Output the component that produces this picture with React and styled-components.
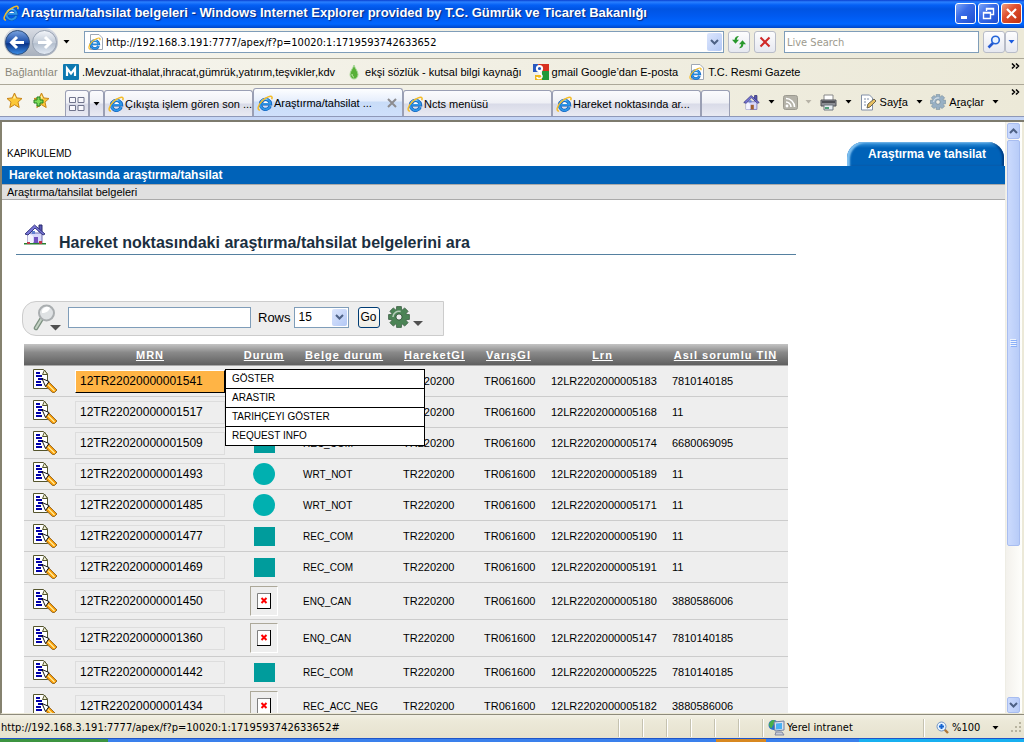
import React from "react"
import styled, { createGlobalStyle, css } from "styled-components"

const GlobalStyle = createGlobalStyle`
    * {
        box-sizing: border-box;
    }
    body {
        margin: 0;
        background: white;
        color: black;
        font-family: "Liberation Sans", Arial, sans-serif;
        overflow: hidden;
    }
    button, input, select {
        font-family: inherit;
        color: inherit;
        margin: 0;
    }
    a {
        color: inherit;
        text-decoration: none;
    }
    svg {
        display: block;
        flex: none;
    }
`

const uiFont = css`
    font-family: "DejaVu Sans Condensed", "DejaVu Sans", sans-serif;
    font-size: 11px;
`

const labelFont = css`
    font-family: "Liberation Sans", Arial, sans-serif;
    font-size: 11px;
`

const Window = styled.div`
    height: 100vh;
    display: flex;
    flex-direction: column;
    background: #ece9d8;
`

/* title bar */

const TitleBar = styled.header`
    flex: none;
    height: 28px;
    padding: 0 2px 2px 3px;
    display: flex;
    align-items: center;
    gap: 2px;
    background: linear-gradient(#0a3fd0 0, #2a80ff 2px, #0560f5 5px, #0054e3 9px, #005af0 16px, #0066ff 24px, #0046c8 28px);
`

const WindowTitle = styled.h1`
    flex: 1;
    min-width: 0;
    margin: 0;
    color: white;
    font-family: "Liberation Sans", Arial, sans-serif;
    font-size: 13px;
    font-weight: 700;
    line-height: 20px;
    white-space: nowrap;
    overflow: hidden;
    text-shadow: 1px 1px 1px #0a2a80;
`

const WindowButton = styled.button`
    width: 21px;
    height: 21px;
    padding: 0;
    display: flex;
    align-items: center;
    justify-content: center;
    border: 1px solid white;
    border-radius: 3px;
    background: ${({ $close }) => ($close
        ? "linear-gradient(135deg, #f0a080, #e05030 40%, #c03010)"
        : "linear-gradient(135deg, #7ea6f8, #3a6ce8 40%, #1f4fd0)")};
`

/* browser bars */

const Bar = styled.div`
    flex: none;
    display: flex;
    align-items: center;
    background: linear-gradient(90deg, #f6f5ee, #ece9d8);
    ${uiFont}
`

const NavBar = styled(Bar)`
    height: 31px;
    padding: 0 6px 2px 4px;
    gap: 4px;
    border-bottom: 1px solid #aca899;
`

const HistoryGroup = styled.div`
    display: flex;
    align-items: center;
    gap: 5px;
    width: 76px;
`

const HistoryPill = styled.div`
    display: flex;
    height: 28px;
    align-items: center;
    border-radius: 14px;
    background: linear-gradient(#d8dce4, #a8b0bc);
`

const PlainButton = styled.button`
    padding: 0;
    border: 0;
    background: none;
    display: flex;
    align-items: center;
    justify-content: center;
    gap: 3px;
    font-size: inherit;
    white-space: nowrap;
`

const AddressBox = styled.label`
    flex: 1;
    min-width: 0;
    height: 22px;
    padding: 0 1px 0 3px;
    display: flex;
    align-items: center;
    gap: 2px;
    background: white;
    border: 1px solid #7f9db9;
`

const BareInput = styled.input`
    flex: 1;
    min-width: 0;
    height: 18px;
    padding: 0;
    border: 0;
    outline: 0;
    background: none;
    font-size: 11px;
    &::placeholder {
        color: #9d9a8e;
        opacity: 1;
    }
`

const DropButton = styled.button`
    width: 15px;
    height: 18px;
    padding: 0;
    display: flex;
    align-items: center;
    justify-content: center;
    border: 0;
    border-radius: 2px;
    background: linear-gradient(135deg, #dce6fd, #b3c8f5);
`

const IconButton = styled.button`
    width: ${({ $width }) => $width || 22}px;
    height: 22px;
    padding: 0;
    display: flex;
    align-items: center;
    justify-content: center;
    border: 1px solid #b8bcc8;
    border-radius: 3px;
    background: linear-gradient(#fdfdfe, #e6e8f0);
`

const SearchGroup = styled.div`
    display: flex;
    gap: 4px;
    margin-left: 4px;
`

const SearchBox = styled(AddressBox)`
    flex: none;
    width: 195px;
    padding: 0 2px;
`

const SplitButtons = styled.div`
    display: flex;
`

const LinksBar = styled(Bar)`
    height: 26px;
    padding: 0 4px 0 5px;
    border-bottom: 1px solid #aca899;
    ${labelFont}
`

const LinksLabel = styled.span`
    width: 58px;
    color: #8a877a;
`

const BookmarkLink = styled.a`
    display: flex;
    align-items: center;
    gap: 3px;
    margin-right: 11px;
    white-space: nowrap;
`

const Chevrons = styled(PlainButton)`
    margin-left: auto;
    align-self: flex-start;
    margin-top: 4px;
`

const TabsBar = styled(Bar)`
    height: 32px;
    padding: 0 4px 0 6px;
    align-items: flex-end;
    border-bottom: 1px solid #8e98b8;
    ${labelFont}
`

const Favourites = styled.div`
    display: flex;
    align-self: center;
    gap: 10px;
    width: 59px;
`

const tabShape = css`
    height: 26px;
    border: 1px solid #9a9fb4;
    border-bottom: 0;
    border-radius: 3px 3px 0 0;
    background: linear-gradient(#fbfbfd 0, #eff0f5 12px, #d9dbe8 13px, #e9eaf2 100%);
`

const SmallTab = styled.button`
    ${tabShape}
    width: ${({ $width }) => $width}px;
    padding: 0;
    display: flex;
    align-items: center;
    justify-content: center;
`

const Tab = styled.button`
    ${tabShape}
    flex: 0 1 ${({ $active }) => ($active ? 150 : 149)}px;
    min-width: 0;
    padding: 0 0 0 3px;
    display: flex;
    align-items: center;
    gap: 1px;
    font-size: 11px;
    ${({ $active }) => $active && css`
        height: 28px;
        padding-right: 5px;
        background: linear-gradient(#fdfeff 0, #e6eefc 12px, #c8dcf8 13px, #cfe0fb 100%);
    `}
`

const TabText = styled.span`
    flex: 1;
    min-width: 0;
    text-align: left;
    white-space: nowrap;
`

const Tools = styled.div`
    flex: 1;
    height: 28px;
    padding: 0 12px 0 13px;
    display: flex;
    align-items: center;
    justify-content: space-between;
`

const TabEdge = styled.div`
    flex: none;
    height: 5px;
    background: #c5d5f5;
    border-bottom: 2px solid #7d7b6e;
`

/* page */

const Viewport = styled.div`
    flex: 1;
    min-height: 0;
    display: flex;
    border-left: 2px solid #85826f;
    border-bottom: 1px solid #ece9d8;
    background: white;
`

const Page = styled.main`
    flex: 1;
    min-width: 0;
    overflow: hidden;
`

const PageTop = styled.div`
    height: 44px;
    padding: 0 1px 0 5px;
    display: flex;
    align-items: flex-end;
    justify-content: space-between;
    font-size: 10px;
`

const UserName = styled.span`
    line-height: 12px;
    padding-bottom: 6px;
`

const PageTab = styled.a`
    width: 157px;
    height: 24px;
    padding-left: 3px;
    border-radius: 16px 16px 0 0;
    background: linear-gradient(#3c9ae0, #0062b8 6px);
    box-shadow: inset 3px 1px 2px #7fc0f0, inset -2px 0 2px #003c80;
    color: white;
    font-size: 12px;
    font-weight: 700;
    line-height: 24px;
    text-align: center;
`

const BlueBar = styled.div`
    height: 18px;
    padding-left: 7px;
    background: #0062b8;
    color: white;
    font-size: 12px;
    font-weight: 700;
    line-height: 19px;
`

const Breadcrumb = styled.div`
    height: 16px;
    padding-left: 5px;
    background: #e0e0e0;
    border-top: 1px solid #aaa;
    border-bottom: 1px solid #aaa;
    font-size: 11px;
    line-height: 15px;
`

const Heading = styled.h2`
    max-width: 780px;
    height: 32px;
    margin: 23px 14px 46px;
    padding-left: 8px;
    display: flex;
    gap: 13px;
    border-bottom: 1px solid #5580a0;
    color: #1b2f3f;
    font-size: 16px;
    line-height: 40px;
`

const SearchForm = styled.form`
    width: 422px;
    height: 35px;
    margin: 0 0 8px 20px;
    padding: 0 0 3px 9px;
    display: flex;
    align-items: center;
    background: #eee;
    border: 1px solid #ccc;
    border-radius: 14px 0 0 14px;
    font-size: 13px;
`

const SearchInput = styled.input`
    width: 183px;
    height: 21px;
    margin: 0 7px 0 4px;
    border: 1px solid #7f9db9;
    background: white;
`

const SelectWrap = styled.span`
    position: relative;
    margin: 0 9px 0 3px;
`

const RowsSelect = styled.select`
    appearance: none;
    display: block;
    width: 55px;
    height: 21px;
    padding: 0 4px;
    border: 1px solid #7f9db9;
    border-radius: 0;
    background: white;
    font-size: 12px;
`

/* lies over the right end of the select */
const SelectArrow = styled.span`
    position: absolute;
    top: 2px;
    right: 2px;
    width: 15px;
    height: 17px;
    display: flex;
    align-items: center;
    justify-content: center;
    border-radius: 2px;
    background: linear-gradient(135deg, #dce6fd, #b3c8f5);
    pointer-events: none;
`

const GoButton = styled.button`
    width: 22px;
    height: 21px;
    padding: 0;
    margin-right: 8px;
    border: 1px solid #003c74;
    border-radius: 3px;
    background: linear-gradient(white, #eeece4);
    font-size: 12px;
`

const Report = styled.table`
    width: 764px;
    margin-left: 22px;
    table-layout: fixed;
    border-collapse: separate;
    border-spacing: 0;
    background: #eee;
    font-size: 11px;
`

const HeadCell = styled.th`
    height: 22px;
    padding: 0;
    background: linear-gradient(#c4c4c4, #8a8a8a 40%, #606060);
    border-bottom: 1px solid #aaa;
    color: white;
    font-size: 11px;
    letter-spacing: 1px;
    line-height: 20px;
    white-space: nowrap;
    a {
        text-decoration: underline;
    }
`

const Cell = styled.td`
    height: ${({ $tall }) => ($tall ? 37 : 31)}px;
    padding: 0 9px;
    border-bottom: 1px solid #ccc;
    white-space: nowrap;
    font-size: ${({ $code }) => ($code ? 10 : 11)}px;
`

const MrnBox = styled.div`
    position: relative;
    height: 23px;
    padding-left: 4px;
    border: 1px solid #ddd;
    font-size: 12px;
    line-height: 21px;
    ${({ $active }) => $active && css`
        background: #ffb445;
        border-color: white black black white;
    `}
`

/* pops up beside the active MRN */
const Popup = styled.ul`
    position: absolute;
    z-index: 2;
    top: -2px;
    left: calc(100% + 1px);
    width: 200px;
    margin: 0;
    padding: 0;
    list-style: none;
    border: 1px solid black;
    background: white;
`

const PopupItem = styled.li`
    height: 19px;
    padding-left: 6px;
    border-bottom: 1px solid black;
    font-size: 10px;
    line-height: 18px;
    &:last-child {
        height: 18px;
        border-bottom: 0;
    }
`

const Mark = styled.div`
    width: 21px;
    height: 19px;
    margin: 0 auto;
    background: #009c9c;
    ${({ $round }) => $round && css`
        width: 22px;
        height: 22px;
        border-radius: 50%;
        background: #00b0b0;
    `}
`

const MissingImage = styled.div`
    width: 28px;
    height: 30px;
    margin: 0 auto;
    display: flex;
    align-items: center;
    justify-content: center;
    border: 1px solid;
    border-color: #aca899 white white #aca899;
`

const ScrollBar = styled.div`
    width: 19px;
    padding: 1px 2px 0 1px;
    display: flex;
    flex-direction: column;
    gap: 1px;
    border-left: 1px solid #eeede5;
    border-right: 2px solid #ece9d8;
    background: linear-gradient(90deg, #f3f1ec, #fefefb);
`

const scrollPart = css`
    display: flex;
    align-items: center;
    justify-content: center;
    border: 1px solid #a8bdf0;
    border-radius: 2px;
    background: linear-gradient(90deg, #cbdafd, #b8ccf8);
`

const ScrollButton = styled.button`
    ${scrollPart}
    height: 16px;
    padding: 0;
    flex: none;
`

const ScrollThumb = styled.div`
    ${scrollPart}
    flex: 407;
`

const ScrollTrack = styled.div`
    flex: 150;
`

/* bottom */

const StatusBar = styled(Bar)`
    height: 24px;
    padding-top: 2px;
    border-top: 1px solid #8e8b7c;
    background: linear-gradient(#f3f1e6, #ece9d8 6px, #e6e2cf);
`

const StatusText = styled.span`
    flex: 1;
    min-width: 0;
    padding-left: 1px;
    white-space: nowrap;
`

const StatusPane = styled.div`
    width: ${({ $width }) => $width}px;
    height: 18px;
    padding-left: 5px;
    display: flex;
    align-items: center;
    gap: 2px;
    border-left: 1px solid #c5c2b0;
    box-shadow: inset 1px 0 white;
`

const ZoomPane = styled(StatusPane)`
    padding: 0 1px 0 12px;
    justify-content: space-between;
`

const Taskbar = styled.div`
    flex: none;
    height: 4px;
    display: flex;
    background: #3a80ec;
    border-top: 1px solid #1f55c8;
`

const TaskPart = styled.div`
    flex: ${({ $grow }) => $grow};
    background: ${({ $color }) => $color};
`

/* icons */

const Caret = ({ color = "black" }) => (
    <svg width="7" height="4" viewBox="0 0 7 4"><path d="M.500 0h6L3.500 3.500z" fill={color} /></svg>
)

const Arrow = ({ up, color = "#4d6185" }) => (
    <svg width="9" height="6" viewBox="0 0 9 6">
        <path d={up ? "M1 5l3.500-3.500L8 5" : "M1 1l3.500 3.500L8 1"} fill="none" stroke={color} strokeWidth="2" />
    </svg>
)

const IeIcon = ({ page, size = 16 }) => (
    <svg width={size} height={size} viewBox="0 0 16 16">
        {page && <path d="M2.500.5h8.500l3.500 3.500v11.500h-12z" fill="white" stroke="#a0a8b4" />}
        <g transform={page ? "translate(0 3) scale(.8)" : undefined}>
            <path d="M13.200 11.200A5 5 0 1 1 13.500 8.800H5" fill="none" stroke="#0c58b4" strokeWidth="3.200" />
            <path d="M13.200 11.200A5 5 0 1 1 13.500 8.800H5" fill="none" stroke="#2e96e8" strokeWidth="2" />
            <path d="M4.500 6.500a4.700 4.700 0 0 1 6-2.200" fill="none" stroke="#a4dcfc" strokeWidth="1.200" />
            <path d="M6 8h5.500a3 2.500 0 0 0-5.500 0z" fill="white" />
            <path d="M3 15C0 15.500 .5 10 5.500 5.500 9 2.200 14 .2 15 2c.3.800 0 1.500-.3 2.200" fill="none" stroke="#f4bc28" strokeWidth="1.500" />
        </g>
    </svg>
)

const RoundArrow = ({ forward }) => (
    <svg width="27" height="27" viewBox="0 0 27 27">
        <defs>
            <linearGradient id={forward ? "fwd" : "back"} x1="0" y1="0" x2="0" y2="1">
                <stop offset="0" stopColor={forward ? "#f4f6fa" : "#7ba4e0"} />
                <stop offset=".5" stopColor={forward ? "#c2cbd8" : "#1c4ea8"} />
                <stop offset=".55" stopColor={forward ? "#b4bfce" : "#0a3388"} />
                <stop offset="1" stopColor={forward ? "#e4ecf6" : "#3d90e8"} />
            </linearGradient>
        </defs>
        <circle cx="13.500" cy="13.500" r="12" fill={`url(#${forward ? "fwd" : "back"})`} stroke={forward ? "#98a2b2" : "#30507c"} />
        <path
            d="M20 13.500H8M13 8l-5.500 5.500L13 19"
            transform={forward ? "matrix(-1 0 0 1 27 0)" : undefined}
            fill="none"
            stroke="white"
            strokeWidth="3"
        />
    </svg>
)

const Star = ({ plus }) => (
    <svg width="17" height="17" viewBox="0 0 17 17">
        <path d="M8.500 1l2.200 4.900 5.300.6-4 3.600 1.200 5.400-4.700-2.800-4.700 2.800L5 10.100 1 6.500l5.300-.6z" fill="#fcc838" stroke="#c88418" />
        <path d="M8.500 3l1.400 3.500H7z" fill="#fff2a0" />
        {plus && <path d="M4 5h3v3h3v3H7v3H4v-3H1V8h3z" fill="#7cdc58" stroke="#228020" />}
    </svg>
)

const HomeIcon = ({ large }) => (
    <svg width={large ? 22 : 17} height={large ? 22 : 17} viewBox="0 0 22 22">
        <path d="M15 2h3v7h-3z" fill="#5a58b8" stroke="#28286c" />
        <path d="M4 10h14v10H4z" fill="#d8d8fa" stroke="#6c6cb0" />
        <path d="M4 10l5 3v7H4z" fill="#f4f4ff" />
        <path d="M1 11L10.500 2 21 11l-2 1-8-7-7 7z" fill="#7876d8" stroke="#383880" />
        <path d="M10 14h4v6h-4z" fill={large ? "#7050c0" : "#a06030"} />
        <path d="M8 8h3v3H8z" fill="#6080d0" />
        {large && <path d="M0 20h22v1.500H0z" fill="#288030" />}
        {large && <path d="M3 19h3v2H3zM15 18h3v3h-3z" fill="#c03848" />}
    </svg>
)

const RssIcon = () => (
    <svg width="15" height="15" viewBox="0 0 15 15">
        <rect x=".5" y=".5" width="14" height="14" rx="2" fill="#b4b2a8" stroke="#9c9a90" />
        <circle cx="4" cy="11" r="1.400" fill="white" />
        <path d="M3 7a5 5 0 0 1 5 5M3 3.500A8.500 8.500 0 0 1 11.500 12" fill="none" stroke="white" strokeWidth="1.600" />
    </svg>
)

const PrinterIcon = () => (
    <svg width="17" height="17" viewBox="0 0 17 17">
        <path d="M4 1h9v6H4z" fill="white" stroke="#888" />
        <path d="M1 6h15v6H1z" fill="#8c8e94" stroke="#505258" />
        <path d="M2 7h13v2H2z" fill="#4c4e54" />
        <path d="M4 11h9v5H4z" fill="#e8eef4" stroke="#707880" />
        <path d="M5 13h4v2H5z" fill="#50a078" />
    </svg>
)

const PageIcon = () => (
    <svg width="17" height="17" viewBox="0 0 17 17">
        <path d="M1.500 1h8l3 3v12h-11z" fill="white" stroke="#8290a8" />
        <path d="M4 5h5M4 8h3M4 11h5" stroke="#8090a8" strokeDasharray="2 1" />
        <path d="M7 14l1-4 6-5 2 2-6 6z" fill="#e8c060" stroke="#6c6450" />
    </svg>
)

const teeth = [0, 45, 90, 135, 180, 225, 270, 315]

const GearIcon = ({ size, fill, stroke, hole }) => (
    <svg width={size} height={size} viewBox="0 0 20 20">
        {teeth.map((angle) => (
            <path key={angle} d="M7.500 5l.3-4.500h4.400l.3 4.500z" fill={fill} stroke={stroke} strokeWidth=".6" transform={`rotate(${angle} 10 10)`} />
        ))}
        <circle cx="10" cy="10" r="6.800" fill={fill} />
        <path d="M4.500 10a5.500 5.500 0 0 1 7-5" fill="none" stroke="white" strokeOpacity=".6" strokeWidth="1.400" />
        <circle cx="10" cy="10" r="2.800" fill={hole} stroke={stroke} strokeWidth=".8" />
    </svg>
)

const QuickTabsIcon = () => (
    <svg width="16" height="14" viewBox="0 0 16 14">
        <path d="M.5.500h6v5h-6zM9 .5h6v5H9zM.500 8.500h6v5h-6zM9 8.500h6v5H9z" fill="#f8f8fc" stroke="#70748c" />
    </svg>
)

const MIcon = () => (
    <svg width="16" height="16" viewBox="0 0 16 16">
        <rect width="16" height="16" rx="1" fill="#0c78b0" />
        <path d="M4 12V4.500l4 5 4-5V12" fill="none" stroke="white" strokeWidth="2.200" />
    </svg>
)

const DropIcon = () => (
    <svg width="16" height="16" viewBox="0 0 16 16">
        <path d="M8 1c1 3.500 4 6 4 9.500a4 4.500 0 0 1-8 0C4 7 7 4.500 8 1z" fill="#58b038" stroke="#a8d898" />
        <path d="M6 10c0 2 1 3 2 3" fill="none" stroke="#d0f0b8" />
    </svg>
)

const GoogleIcon = () => (
    <svg width="16" height="16" viewBox="0 0 16 16">
        <path d="M0 0h5v8H0z" fill="#2858c0" />
        <path d="M5 0h11v7H7z" fill="#d83020" />
        <path d="M9 7h7v9H9z" fill="#209838" />
        <path d="M0 8h9v8H0z" fill="#f0efe8" />
        <path d="M2 11h7v5H2z" fill="#f0b818" />
        <circle cx="6.500" cy="4.500" r="2.600" fill="#2858c0" stroke="white" strokeWidth="2" />
        <path d="M7 8c-2 2 3 2 2 5-1 2-5 2-5 0" fill="none" stroke="white" strokeWidth="1.600" />
    </svg>
)

const RefreshIcon = () => (
    <svg width="14" height="14" viewBox="0 0 16 16">
        <path d="M8 1C5 1 3 2.500 3 5.500H0L4 10l4-4.500H5.500C5.500 4 6 3 8 1z" fill="#28982c" />
        <path d="M8 15c3 0 5-1.500 5-4.500h3L12 6l-4 4.500h2.500c0 1.500-.5 2.500-2.500 4.500z" fill="#28982c" />
    </svg>
)

const Magnifier = () => (
    <svg width="14" height="14" viewBox="0 0 14 14">
        <path d="M6 8l-4.500 4.500" stroke="#2458d0" strokeWidth="2.600" />
        <circle cx="8.500" cy="5" r="3.800" fill="#eaf4ff" stroke="#2464d8" strokeWidth="1.600" />
    </svg>
)

const SearchLens = () => (
    <svg width="32" height="28" viewBox="0 0 32 28">
        <path d="M9.500 16L4 25" stroke="#7c9080" strokeWidth="4.500" strokeLinecap="round" />
        <path d="M9.500 16L4 25" stroke="#c4d2c4" strokeWidth="2" strokeLinecap="round" />
        <circle cx="14.500" cy="10" r="7.500" fill="#dfe2e4" stroke="#aaaeb0" strokeWidth="2" />
        <path d="M10 10a5 5 0 0 1 8-5c-1 3-4 5-8 5z" fill="white" />
        <path d="M18 22h11l-5.500 5.500z" fill="#505050" />
    </svg>
)

const EditIcon = () => (
    <svg width="25" height="24" viewBox="0 0 25 24">
        <path d="M.5.500h10l4 4.500v14.500H.5z" fill="white" stroke="#54542c" />
        <path d="M9.500 5.500l2-4.500 3 4.500z" fill="#f4f4d8" stroke="#54542c" />
        <path d="M3 3.500h4M3 6.500h6M5 9.500h5M3 12.500h5M3 15.500h6" stroke="#0000a8" strokeWidth="2" shapeRendering="crispEdges" />
        <path d="M16 13l8 8-2.500 2.500h-2L12.500 17z" fill="#f89c08" stroke="#704808" strokeWidth=".7" />
        <path d="M9 9.500l7 3-3.500 5z" fill="white" stroke="black" strokeWidth=".9" />
        <path d="M15 15.500l6.500 6.500" stroke="#fff0a0" strokeWidth="1.200" />
    </svg>
)

const BrokenIcon = () => (
    <svg width="14" height="16" viewBox="0 0 14 16">
        <path d="M.5.500h13v15H.5z" fill="white" stroke="#808080" />
        <path d="M13.500 0v15.500H0" fill="none" stroke="black" />
        <path d="M4.500 5l5 5M9.500 5l-5 5" stroke="red" strokeWidth="2" />
    </svg>
)

const IntranetIcon = () => (
    <svg width="17" height="17" viewBox="0 0 17 17">
        <circle cx="5.500" cy="6" r="5" fill="#2870c8" />
        <path d="M1 5c2-4 5-5 6-3S4 6 4 9C2 9 1 7 1 5z" fill="#48b048" />
        <path d="M6 3l10-1v9l-9 1z" fill="#d8e0f0" stroke="#7080a0" />
        <path d="M8 4.500l6-.5v6l-6 .5z" fill="#48b0f4" />
        <path d="M8 13h6l2 3H7z" fill="#c8ccd8" stroke="#8088a0" />
    </svg>
)

const ZoomIcon = () => (
    <svg width="13" height="13" viewBox="0 0 13 13">
        <path d="M8 8l4 4" stroke="#b07838" strokeWidth="2.400" />
        <circle cx="5.500" cy="5.500" r="4.500" fill="#e4f2ff" stroke="#7494c0" />
        <path d="M5.500 3v5M3 5.500h5" stroke="#1464d0" strokeWidth="2" />
    </svg>
)

const GripIcon = () => (
    <svg width="12" height="12" viewBox="0 0 12 12">
        <path d="M8 0h2v2H8zM4 4h2v2H4zM8 4h2v2H8zM0 8h2v2H0zM4 8h2v2H4zM8 8h2v2H8z" fill="#b8b4a0" />
    </svg>
)

const ChevronsIcon = () => (
    <svg width="9" height="6" viewBox="0 0 9 6">
        <path d="M1 .5L3.500 3 1 5.500M5 .5L7.500 3 5 5.500" fill="none" stroke="black" strokeWidth="1.500" />
    </svg>
)

/* data */

const url = "http://192.168.3.191:7777/apex/f?p=10020:1:1719593742633652"

const bookmarks = [
    { icon: <MIcon />, text: ".Mevzuat-ithalat,ihracat,gümrük,yatırım,teşvikler,kdv" },
    { icon: <DropIcon />, text: "ekşi sözlük - kutsal bilgi kaynağı" },
    { icon: <GoogleIcon />, text: "gmail Google’dan E-posta" },
    { icon: <IeIcon page />, text: "T.C. Resmi Gazete" },
]

const tabs = [
    { text: "Çıkışta işlem gören son ..." },
    { text: "Araştırma/tahsilat ...", active: true },
    { text: "Ncts menüsü" },
    { text: "Hareket noktasında ar..." },
]

const columns = [
    { width: 42 },
    { width: 168, title: "MRN" },
    { width: 60, title: "Durum" },
    { width: 100, title: "Belge durum" },
    { width: 81, title: "HareketGI" },
    { width: 67, title: "VarışGI" },
    { width: 121, title: "Lrn" },
    { width: 125, title: "Asıl sorumlu TIN" },
]

const rows = [
    { mrn: "1541", code: "REC_COM", lrn: "5183", tin: "7810140185", active: true },
    { mrn: "1517", code: "REC_COM", lrn: "5168", tin: "11" },
    { mrn: "1509", code: "REC_COM", lrn: "5174", tin: "6680069095" },
    { mrn: "1493", code: "WRT_NOT", lrn: "5189", tin: "11" },
    { mrn: "1485", code: "WRT_NOT", lrn: "5171", tin: "11" },
    { mrn: "1477", code: "REC_COM", lrn: "5190", tin: "11" },
    { mrn: "1469", code: "REC_COM", lrn: "5191", tin: "11" },
    { mrn: "1450", code: "ENQ_CAN", lrn: "5180", tin: "3880586006" },
    { mrn: "1360", code: "ENQ_CAN", lrn: "5147", tin: "7810140185" },
    { mrn: "1442", code: "REC_COM", lrn: "5225", tin: "7810140185" },
    { mrn: "1434", code: "REC_ACC_NEG", lrn: "5182", tin: "3880586006" },
]

const menu = ["GÖSTER", "ARASTIR", "TARIHÇEYI GÖSTER", "REQUEST INFO"]

const Status = ({ code }) => {
    switch (code) {
        case "REC_COM":
            return <Mark />
        case "WRT_NOT":
            return <Mark $round />
        default:
            return <MissingImage><BrokenIcon /></MissingImage>
    }
}

const Row = ({ mrn, code, lrn, tin, active }) => {
    const tall = code === "ENQ_CAN" || code === "REC_ACC_NEG"
    return (
        <tr>
            <Cell $tall={tall}><a href="#edit" aria-label="Edit"><EditIcon /></a></Cell>
            <Cell $tall={tall}>
                <MrnBox $active={active}>
                    <a href="#mrn">12TR2202000000{mrn}</a>
                    {active && (
                        <Popup>
                            {menu.map((item) => <PopupItem key={item}><a href="#item">{item}</a></PopupItem>)}
                        </Popup>
                    )}
                </MrnBox>
            </Cell>
            <Cell $tall={tall}><Status code={code} /></Cell>
            <Cell $tall={tall} $code>{code}</Cell>
            <Cell $tall={tall}>TR220200</Cell>
            <Cell $tall={tall}>TR061600</Cell>
            <Cell $tall={tall}>12LR220200000{lrn}</Cell>
            <Cell $tall={tall}>{tin}</Cell>
        </tr>
    )
}

const BrowserHead = () => (
    <>
        <TitleBar>
            <IeIcon />
            <WindowTitle>
                Araştırma/tahsilat belgeleri - Windows Internet Explorer provided by T.C. Gümrük ve Ticaret Bakanlığı
            </WindowTitle>
            <WindowButton aria-label="Minimize">
                <svg width="13" height="13" viewBox="0 0 13 13"><path d="M2 9h6v3H2z" fill="white" /></svg>
            </WindowButton>
            <WindowButton aria-label="Restore">
                <svg width="13" height="13" viewBox="0 0 13 13">
                    <path d="M4.500 4V1.500h7v6H9M1.500 5.500h7v6h-7zM1.500 6h7M4.500 2h7" fill="none" stroke="white" strokeWidth="1.400" />
                </svg>
            </WindowButton>
            <WindowButton $close aria-label="Close">
                <svg width="13" height="13" viewBox="0 0 13 13"><path d="M2 2l9 9M11 2l-9 9" stroke="white" strokeWidth="2.200" /></svg>
            </WindowButton>
        </TitleBar>
        <NavBar>
            <HistoryGroup>
                <HistoryPill>
                    <PlainButton aria-label="Back"><RoundArrow /></PlainButton>
                    <PlainButton aria-label="Forward"><RoundArrow forward /></PlainButton>
                </HistoryPill>
                <PlainButton aria-label="History"><Caret /></PlainButton>
            </HistoryGroup>
            <AddressBox>
                <IeIcon page />
                <BareInput aria-label="Address" defaultValue={url} />
                <DropButton aria-label="Addresses"><Arrow /></DropButton>
            </AddressBox>
            <IconButton aria-label="Refresh"><RefreshIcon /></IconButton>
            <IconButton aria-label="Stop">
                <svg width="12" height="12" viewBox="0 0 12 12"><path d="M1.500 1.500l9 9M10.500 1.500l-9 9" stroke="#d02828" strokeWidth="2" /></svg>
            </IconButton>
            <SearchGroup>
                <SearchBox><BareInput aria-label="Search" placeholder="Live Search" /></SearchBox>
                <SplitButtons>
                    <IconButton aria-label="Find"><Magnifier /></IconButton>
                    <IconButton $width={13} aria-label="Find options"><Caret color="#1c5ce0" /></IconButton>
                </SplitButtons>
            </SearchGroup>
        </NavBar>
        <LinksBar>
            <LinksLabel>Bağlantılar</LinksLabel>
            {bookmarks.map(({ icon, text }) => (
                <BookmarkLink href="#bookmark" key={text}>{icon}{text}</BookmarkLink>
            ))}
            <Chevrons aria-label="More links"><ChevronsIcon /></Chevrons>
        </LinksBar>
        <TabsBar>
            <Favourites>
                <PlainButton aria-label="Favourites"><Star /></PlainButton>
                <PlainButton aria-label="Add favourite"><Star plus /></PlainButton>
            </Favourites>
            <SmallTab $width={24} aria-label="Quick tabs"><QuickTabsIcon /></SmallTab>
            <SmallTab $width={15} aria-label="Tab list"><Caret /></SmallTab>
            {tabs.map(({ text, active }) => (
                <Tab key={text} $active={active}>
                    <IeIcon />
                    <TabText>{text}</TabText>
                    {active && (
                        <svg width="10" height="10" viewBox="0 0 10 10"><path d="M1 1l8 8M9 1L1 9" stroke="#8c8c90" strokeWidth="2" /></svg>
                    )}
                </Tab>
            ))}
            <SmallTab $width={29} aria-label="New tab" />
            <Tools>
                <PlainButton aria-label="Home"><HomeIcon /></PlainButton>
                <Caret />
                <PlainButton aria-label="Feeds"><RssIcon /></PlainButton>
                <Caret color="#b8b4a8" />
                <PlainButton aria-label="Print"><PrinterIcon /></PlainButton>
                <Caret />
                <PlainButton><PageIcon /><span>Say<u>f</u>a</span></PlainButton>
                <Caret />
                <PlainButton>
                    <GearIcon size={16} fill="#98b0c4" stroke="#647c90" hole="#f0eee4" />
                    <span>A<u>r</u>açlar</span>
                </PlainButton>
                <Caret />
            </Tools>
            <Chevrons aria-label="More tools"><ChevronsIcon /></Chevrons>
        </TabsBar>
        <TabEdge />
    </>
)

const App = () => {
    return (
        <Window>
            <GlobalStyle />
            <BrowserHead />
            <Viewport>
                <Page>
                    <PageTop>
                        <UserName>KAPIKULEMD</UserName>
                        <PageTab href="#tab">Araştırma ve tahsilat</PageTab>
                    </PageTop>
                    <BlueBar>Hareket noktasında araştırma/tahsilat</BlueBar>
                    <Breadcrumb>Araştırma/tahsilat belgeleri</Breadcrumb>
                    <Heading><HomeIcon large />Hareket noktasındaki araştırma/tahsilat belgelerini ara</Heading>
                    <SearchForm onSubmit={(e) => e.preventDefault()}>
                        <PlainButton type="button" aria-label="Search columns"><SearchLens /></PlainButton>
                        <SearchInput aria-label="Search text" />
                        <label htmlFor="rows">Rows</label>
                        <SelectWrap>
                            <RowsSelect id="rows" defaultValue="15">
                                <option>15</option>
                                <option>50</option>
                            </RowsSelect>
                            <SelectArrow><Arrow /></SelectArrow>
                        </SelectWrap>
                        <GoButton>Go</GoButton>
                        <PlainButton type="button" aria-label="Actions">
                            <GearIcon size={22} fill="#4c8456" stroke="#2c5034" hole="#eee" />
                            <svg width="10" height="18" viewBox="0 0 10 18"><path d="M0 13h10l-5 5z" fill="#505050" /></svg>
                        </PlainButton>
                    </SearchForm>
                    <Report>
                        <colgroup>
                            {columns.map(({ width }, i) => <col key={i} width={width} />)}
                        </colgroup>
                        <thead>
                            <tr>
                                {columns.map(({ title }, i) => (
                                    <HeadCell key={i}>{title && <a href="#sort">{title}</a>}</HeadCell>
                                ))}
                            </tr>
                        </thead>
                        <tbody>
                            {rows.map((row) => <Row key={row.mrn} {...row} />)}
                        </tbody>
                    </Report>
                </Page>
                <ScrollBar>
                    <ScrollButton aria-label="Scroll up"><Arrow up /></ScrollButton>
                    <ScrollThumb>
                        <svg width="7" height="8" viewBox="0 0 7 8">
                            <path d="M0 .5h6M0 2.500h6M0 4.500h6M0 6.500h6" stroke="#eef4fe" />
                            <path d="M1 1.500h6M1 3.500h6M1 5.500h6M1 7.500h6" stroke="#8cb0f8" />
                        </svg>
                    </ScrollThumb>
                    <ScrollTrack />
                    <ScrollButton aria-label="Scroll down"><Arrow /></ScrollButton>
                </ScrollBar>
            </Viewport>
            <StatusBar>
                <StatusText>{url}#</StatusText>
                {[1, 2, 3, 4, 5, 6].map((n) => <StatusPane key={n} $width={24} />)}
                <StatusPane $width={161}><IntranetIcon />Yerel intranet</StatusPane>
                <ZoomPane $width={101}>
                    <PlainButton><ZoomIcon />%100</PlainButton>
                    <Caret />
                    <GripIcon />
                </ZoomPane>
            </StatusBar>
            <Taskbar>
                <TaskPart $grow={108} $color="#3c9440" />
                <TaskPart $grow={608} $color="#3a80ec" />
                <TaskPart $grow={50} $color="#d88820" />
                <TaskPart $grow={93} $color="#3a80ec" />
                <TaskPart $grow={165} $color="#18b0f0" />
            </Taskbar>
        </Window>
    )
}

export default App
